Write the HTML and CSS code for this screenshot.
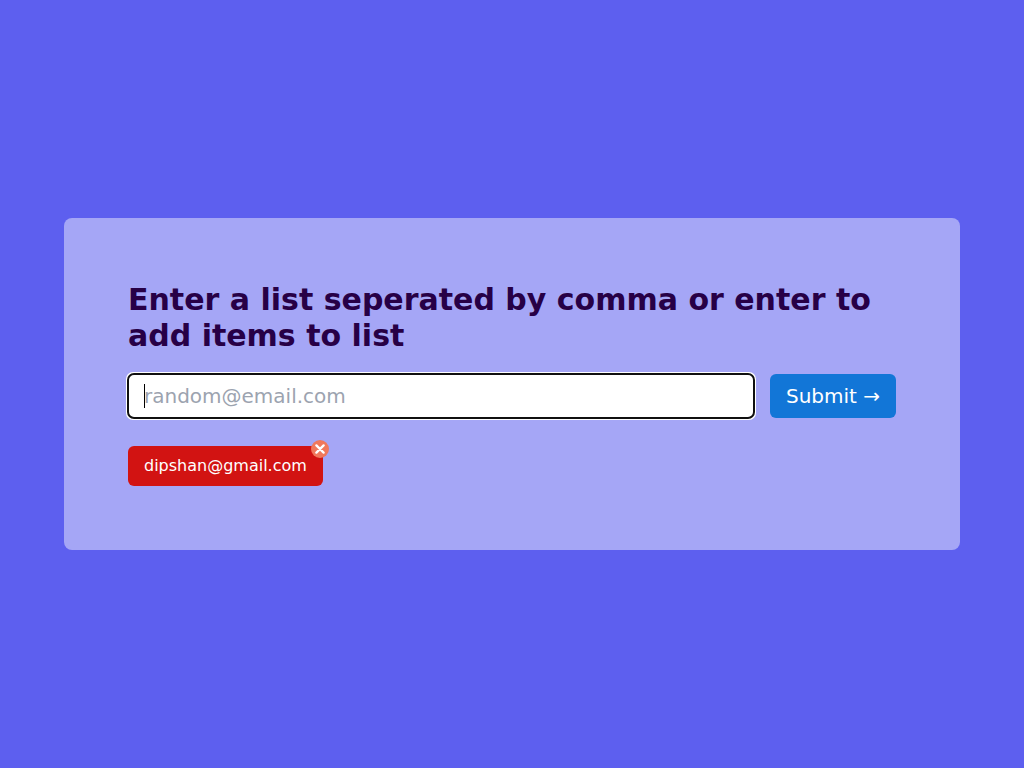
FILE: index.html
```html
<!DOCTYPE html>
<html lang="en">
<head>
<meta charset="utf-8">
<title>List input</title>
<link rel="stylesheet" href="styles.css">
</head>
<body>
<main class="page">
  <section class="card">
    <h1 class="title"><label for="item">Enter a list seperated by comma or enter to add items to list</label></h1>
    <form class="entry">
      <div class="field-wrap">
        <input class="field" id="item" type="text" placeholder="random@email.com" autocomplete="off" autofocus>
      </div>
      <button class="submit" type="submit">Submit →</button>
    </form>
    <ul class="tags">
      <li class="tag">dipshan@gmail.com
        <button class="remove" type="button" aria-label="Remove dipshan@gmail.com">
          <svg class="cross" viewBox="0 0 10 10" aria-hidden="true"><path d="M1.4 1.4L8.6 8.6M8.6 1.4L1.4 8.6"/></svg>
        </button>
      </li>
    </ul>
  </section>
</main>
</body>
</html>
```

FILE: styles.css
```css
* { box-sizing: border-box; }
body {
  margin: 0;
  font-family: "DejaVu Sans", sans-serif;
  font-size: 16px;
  line-height: 24px;
}
.page {
  min-height: 100vh;
  padding: 64px;
  display: flex;
  align-items: center;
  background: #5d5fef;
}
.card {
  flex: 1;
  padding: 64px;
  border-radius: 8px;
  background: #a5a6f6;
}
.title {
  margin: 0 0 20px;
  color: #270046;
  font-size: 30px;
  line-height: 36px;
  font-weight: 700;
}
.entry {
  display: flex;
  gap: 16px;
  margin-bottom: 28px;
}
.field-wrap {
  position: relative;
  flex: 1;
  min-width: 0;
}
.field-wrap:has(:placeholder-shown:focus)::after {
  content: "";
  position: absolute;
  top: 10px;
  left: 16px;
  width: 1px;
  height: 24px;
  background: #000;
  pointer-events: none;
}
.field, .submit {
  display: block;
  height: 44px;
  padding: 8px 16px;
  border: 0;
  border-radius: 6px;
  font: inherit;
  font-size: 20px;
  line-height: 28px;
}
.field {
  width: 100%;
  background: #fff;
  color: #000;
}
.field:focus { outline: -webkit-focus-ring-color auto 1px; }
.field:placeholder-shown { caret-color: transparent; }
.field::placeholder { color: #9ca3af; }
.submit {
  background: #1276d7;
  color: #fff;
  cursor: pointer;
}
.tags {
  display: flex;
  flex-wrap: wrap;
  gap: 16px;
  margin: 0;
  padding: 0;
  list-style: none;
}
.tag {
  position: relative;
  padding: 8px 16px;
  border-radius: 6px;
  background: #d21312;
  color: #fff;
}
.remove {
  position: absolute;
  top: -6px;
  right: -6px;
  display: flex;
  align-items: center;
  justify-content: center;
  width: 18px;
  height: 18px;
  padding: 0;
  border: 0;
  border-radius: 50%;
  background: #f0785c;
  cursor: pointer;
}
.cross {
  width: 10px;
  height: 10px;
  fill: none;
  stroke: #fff;
  stroke-width: 2.3;
  stroke-linecap: round;
}
```
